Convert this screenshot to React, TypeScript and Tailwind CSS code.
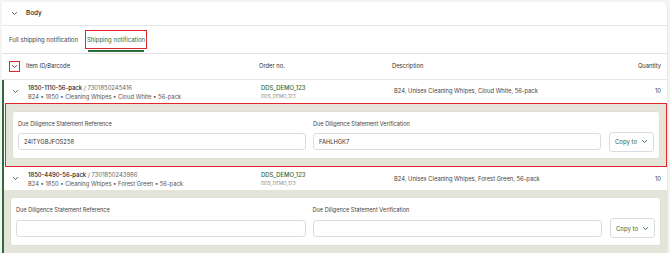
import React from 'react'

const green = 'text-[#2d6a3e]'

function Chevron({ className = '' }: { className?: string }) {
  return (
    <svg viewBox="0 0 10 10" className={`w-[7px] h-[7px] ${className}`} fill="none" stroke="currentColor" strokeWidth={1.4}>
      <path d="M2 3.5 5 6.5 8 3.5" strokeLinecap="round" strokeLinejoin="round" />
    </svg>
  )
}

type Item = {
  id: string
  barcode: string
  meta: string
  description: string
  qty: number
  reference: string
  verification: string
  highlight?: boolean
}

const items: Item[] = [
  {
    id: '1850-1110-56-pack',
    barcode: '7301850245416',
    meta: 'B24 • 1850 • Cleaning Whipes • Cloud White • 56-pack',
    description: 'B24, Unisex Cleaning Whipes, Cloud White, 56-pack',
    qty: 10,
    reference: '24ITYGBJFOS258',
    verification: 'FAHLHGK7',
    highlight: true,
  },
  {
    id: '1850-4490-56-pack',
    barcode: '7301850243986',
    meta: 'B24 • 1850 • Cleaning Whipes • Forest Green • 56-pack',
    description: 'B24, Unisex Cleaning Whipes, Forest Green, 56-pack',
    qty: 10,
    reference: '',
    verification: '',
  },
]

const cols = 'grid grid-cols-[24px_233px_133px_1fr_auto] items-center pr-[6px]'

function DdsPanel({ item }: { item: Item }) {
  return (
    <div
      className={`bg-[#e4e4d8] px-[6px] py-[7px] ${
        item.highlight ? 'border border-[#e0262b] ml-[1px]' : ''
      }`}
    >
      <div className="bg-white rounded-[3px] border border-[#dedfd6] px-[5px] pt-[8px] pb-[8px] flex items-end gap-[7px]">
        <div className="flex-1 flex flex-col gap-[5px]">
          <span className="text-[5.6px] text-[#444]">Due Diligence Statement Reference</span>
          <div className="h-[17px] border border-[#d9dde2] rounded-[3px] px-[5px] flex items-center text-[5.8px] text-[#333]">
            {item.reference}
          </div>
        </div>
        <div className="flex-1 flex flex-col gap-[5px]">
          <span className="text-[5.6px] text-[#444]">Due Diligence Statement Verification</span>
          <div className="h-[17px] border border-[#d9dde2] rounded-[3px] px-[5px] flex items-center text-[5.8px] text-[#333]">
            {item.verification}
          </div>
        </div>
        <button className={`h-[20px] w-[45px] mb-[-1.5px] ml-[1px] border border-[#d9dde2] rounded-[3px] flex items-center justify-center gap-[4px] text-[6px] ${green} bg-white`}>
          Copy to
          <Chevron className="w-[6px] h-[6px]" />
        </button>
      </div>
    </div>
  )
}

export default function App() {
  return (
    <div className="w-[670px] h-[253px] overflow-hidden bg-[#f4f4f1] pl-[2px] pt-[2px] pr-[2px] font-['Inter',sans-serif] text-[#333]">
      <div className="bg-white rounded-tr-[6px] h-full border-r border-[#e6e6e3]">
        {/* Section header */}
        <div className="h-[24px] flex items-center border-b border-[#e5e7e7]">
          <div className="w-[24px] flex justify-center text-[#555]">
            <Chevron />
          </div>
          <span className="text-[6.4px] font-medium text-[#222]">Body</span>
        </div>

        {/* Tabs */}
        <div className="h-[28px] flex items-stretch border-b border-[#dfe3e3] pl-[7px] gap-[7px] text-[6px] leading-none">
          <div className="flex items-center text-[#444]">Full shipping notification</div>
          <div className="relative flex items-center">
            <div className={`border border-[#e0262b] w-[62px] h-[19px] flex items-center justify-center ${green}`}>
              Shipping notification
            </div>
            <div className="absolute bottom-[1px] left-[3px] right-[3px] h-[2px] bg-[#2d6a3e]" />
          </div>
        </div>

        {/* Table header */}
        <div className={`${cols} h-[26px] border-b border-[#e5e7e7] text-[5.8px] text-[#333]`}>
          <div className="flex justify-center">
            <div className="w-[11px] h-[11px] border border-[#e0262b] flex items-center justify-center text-[#555]">
              <Chevron className="w-[6px] h-[6px]" />
            </div>
          </div>
          <span>Item ID/Barcode</span>
          <span>Order no.</span>
          <span>Description</span>
          <span className="text-right">Quantity</span>
        </div>

        {/* Rows */}
        {items.map((item) => (
          <div key={item.id} className="border-l-2 border-[#2d6a3e]">
            <div className={`${cols} h-[23px] -ml-[2px] pl-[2px]`}>
              <div className="flex justify-center text-[#555] -ml-[2px]">
                <Chevron />
              </div>
              <div className="flex flex-col leading-[9px]">
                <span className="text-[5.9px]">
                  <span className="font-medium text-[#222]">{item.id}</span>
                  <span className="text-[#666]"> / {item.barcode}</span>
                </span>
                <span className="text-[5.8px] text-[#555]">{item.meta}</span>
              </div>
              <div className="flex flex-col leading-[9px]">
                <span className={`text-[5.9px] font-medium ${green}`}>DDS_DEMO_123</span>
                <span className="text-[4.6px] text-[#888]">DDS_DEMO_123</span>
              </div>
              <span className="text-[5.8px] text-[#444]">{item.description}</span>
              <span className="text-[5.8px] text-right text-[#444]">{item.qty}</span>
            </div>
            <DdsPanel item={item} />
          </div>
        ))}
      </div>
    </div>
  )
}
